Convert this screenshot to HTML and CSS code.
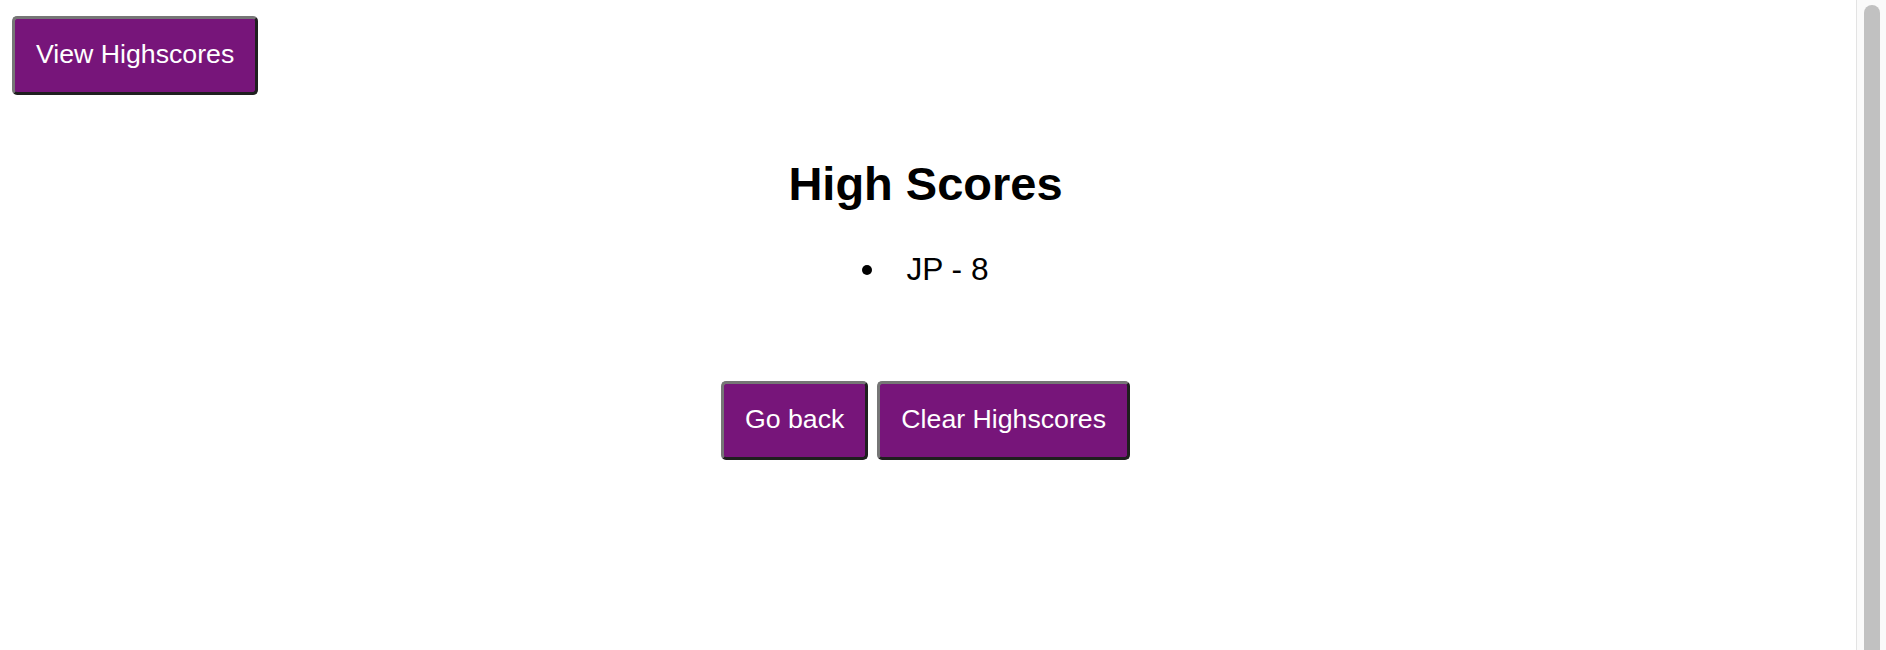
FILE: index.html
```html
<!DOCTYPE html>
<html lang="en">
<head>
<meta charset="utf-8">
<title>High Scores</title>
<link rel="stylesheet" href="styles.css">
</head>
<body>
<div class="page">
  <header class="topbar">
    <button class="btn">View Highscores</button>
  </header>
  <main class="scores">
    <h1 class="title">High Scores</h1>
    <ul class="score-list">
      <li class="score-item">JP - 8</li>
    </ul>
    <div class="actions">
      <button class="btn">Go back</button>
      <button class="btn">Clear Highscores</button>
    </div>
  </main>
</div>
<div class="scrollbar"><div class="scrollbar-thumb"></div></div>
</body>
</html>
```

FILE: styles.css
```css
html, body {
  margin: 0;
  padding: 0;
  background: #ffffff;
}

body {
  font-family: "Liberation Sans", Arial, Helvetica, sans-serif;
  color: #000;
  height: 650px;
  overflow: hidden;
}

.page {
  margin-right: 30px;
}

.topbar {
  display: flex;
  padding: 16px 12px 0;
}

.btn {
  font-family: "Liberation Sans", Arial, Helvetica, sans-serif;
  font-size: 26.7px;
  line-height: 30px;
  color: #ffffff;
  background: #77157a;
  border: 3px solid;
  border-color: #767676 #1f1f1f #1f1f1f #767676;
  border-radius: 5px;
  padding: 20px 21px 23px;
  margin: 0;
  cursor: pointer;
}

.scores {
  display: flex;
  flex-direction: column;
  align-items: center;
  padding-right: 5px;
}

.title {
  font-size: 47px;
  line-height: 54px;
  font-weight: bold;
  margin: 62px 0 0;
}

.score-list {
  list-style: none;
  margin: 40px 0 0;
  padding: 0;
}

.score-item {
  display: flex;
  align-items: center;
  font-size: 31.7px;
  line-height: 36px;
}

.score-item::before {
  content: "";
  width: 10px;
  height: 10px;
  border-radius: 50%;
  background: #000;
  margin-right: 34px;
  margin-top: 2px;
}

.actions {
  display: flex;
  gap: 9px;
  margin-top: 94px;
}

.scrollbar {
  position: fixed;
  top: 0;
  right: 0;
  width: 29px;
  height: 100%;
  background: #fafafa;
  border-left: 1px solid #e3e3e3;
}

.scrollbar-thumb {
  position: absolute;
  left: 7px;
  top: 5px;
  bottom: -10px;
  width: 16px;
  border-radius: 8px;
  background: #c1c1c1;
}
```
